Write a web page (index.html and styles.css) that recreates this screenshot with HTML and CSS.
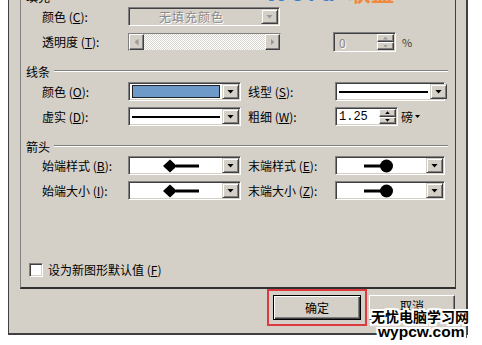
FILE: index.html
```html
<!DOCTYPE html>
<html lang="zh-CN">
<head>
<meta charset="utf-8">
<title>设置自选图形格式</title>
<link rel="stylesheet" href="styles.css">
</head>
<body>
<div class="dialog">
  <div class="panel">
    <div class="head"><span class="head-text">填充</span><i class="rule"></i></div>

    <div class="row r1">
      <span class="lbl">颜色 (<u>C</u>):</span>
      <div class="field combo disabled w-fill">
        <span class="combo-val grayed">无填充颜色</span>
        <span class="dd"><i class="tri tri-dis"></i></span>
      </div>
    </div>

    <div class="row r2">
      <span class="lbl">透明度 (<u>T</u>):</span>
      <div class="slider">
        <span class="sbtn"><i class="tri-l"></i></span>
        <span class="track"></span>
        <span class="sbtn"><i class="tri-r"></i></span>
      </div>
      <div class="field spin disabled pct-spin">
        <span class="spin-val grayed">0</span>
        <span class="spin-btns"><span class="sb"><i class="up dis"></i></span><span class="sb"><i class="down dis"></i></span></span>
      </div>
      <span class="unit pct">%</span>
    </div>

    <div class="head h2"><span class="head-text">线条</span><i class="rule"></i></div>

    <div class="row r3">
      <span class="lbl">颜色 (<u>O</u>):</span>
      <div class="field combo w-left">
        <span class="combo-val"><span class="swatch"></span></span>
        <span class="dd"><i class="tri"></i></span>
      </div>
      <span class="lbl lbl2">线型 (<u>S</u>):</span>
      <div class="field combo w-right">
        <span class="combo-val"><span class="line thin"></span></span>
        <span class="dd"><i class="tri"></i></span>
      </div>
    </div>

    <div class="row r4">
      <span class="lbl">虚实 (<u>D</u>):</span>
      <div class="field combo w-left">
        <span class="combo-val"><span class="line"></span></span>
        <span class="dd"><i class="tri"></i></span>
      </div>
      <span class="lbl lbl2">粗细 (<u>W</u>):</span>
      <div class="field spin w-spin">
        <span class="spin-val mono">1.25</span>
        <span class="spin-btns"><span class="sb"><i class="up"></i></span><span class="sb"><i class="down"></i></span></span>
      </div>
      <span class="unit pt">磅<i class="mini-tri"></i></span>
    </div>

    <div class="head h3"><span class="head-text">箭头</span><i class="rule"></i></div>

    <div class="row r5">
      <span class="lbl">始端样式 (<u>B</u>):</span>
      <div class="field combo w-left">
        <span class="combo-val start-arrow">
          <svg width="38" height="14" viewBox="0 0 38 14"><polygon points="0,7 7,0.5 14,7 7,13.5" fill="#000"/><rect x="13" y="5.5" width="23" height="3" fill="#000"/></svg>
        </span>
        <span class="dd"><i class="tri"></i></span>
      </div>
      <span class="lbl lbl2">末端样式 (<u>E</u>):</span>
      <div class="field combo w-right">
        <span class="combo-val end-arrow">
          <svg width="30" height="14" viewBox="0 0 30 14"><rect x="0" y="5.5" width="20" height="3" fill="#000"/><circle cx="22.5" cy="7" r="6.5" fill="#000"/></svg>
        </span>
        <span class="dd"><i class="tri"></i></span>
      </div>
    </div>

    <div class="row r6">
      <span class="lbl">始端大小 (<u>I</u>):</span>
      <div class="field combo w-left">
        <span class="combo-val start-arrow">
          <svg width="38" height="14" viewBox="0 0 38 14"><polygon points="0,7 7,0.5 14,7 7,13.5" fill="#000"/><rect x="13" y="5.5" width="23" height="3" fill="#000"/></svg>
        </span>
        <span class="dd"><i class="tri"></i></span>
      </div>
      <span class="lbl lbl2">末端大小 (<u>Z</u>):</span>
      <div class="field combo w-right">
        <span class="combo-val end-arrow">
          <svg width="30" height="14" viewBox="0 0 30 14"><rect x="0" y="5.5" width="20" height="3" fill="#000"/><circle cx="22.5" cy="7" r="6.5" fill="#000"/></svg>
        </span>
        <span class="dd"><i class="tri"></i></span>
      </div>
    </div>

    <div class="check-row">
      <span class="checkbox"></span>
      <span class="check-label">设为新图形默认值 (<u>F</u>)</span>
    </div>
  </div>

  <div class="buttons">
    <div class="btn btn-default">确定</div>
    <div class="btn btn-cancel">取消</div>
  </div>
</div>

<div class="wm-top"><span class="wm-word">Word</span><span class="wm-lm">联盟</span></div>
<div class="wm-bottom">
  <div class="wm-cn">无忧电脑学习网</div>
  <div class="wm-en">wypcw.com<i class="wm-bar"></i></div>
</div>
</body>
</html>
```

FILE: styles.css
```css
* { box-sizing: border-box; }
html, body { margin: 0; padding: 0; }
body {
  width: 482px;
  height: 345px;
  overflow: hidden;
  position: relative;
  background: #ffffff;
  font-family: "Noto Sans CJK SC", "Noto Sans", sans-serif;
  font-size: 12px;
  color: #000;
}
u { text-decoration: underline; text-underline-offset: 1px; }

.dialog {
  width: 460px;
  margin: -30px 0 0 8px;
  padding: 14px 10px 13px 11px;
  background: #d4d0c8;
  border-left: 1px solid #404040;
  border-right: 2px solid #404040;
  border-bottom: 2px solid #404040;
  display: flow-root;
}

.panel {
  width: 436px;
  padding: 5px 7px 10px 5px;
  border: 1px solid #808080;
  border-right-color: #404040;
  border-bottom: 2px solid #303030;
  display: flex;
  flex-direction: column;
}

.head {
  height: 14px;
  display: flex;
  align-items: center;
}
.head-text { line-height: 14px; white-space: nowrap; }
.rule {
  flex: 1;
  height: 2px;
  margin: -2px 0 0 4px;
  border-top: 1px solid #808080;
  border-bottom: 1px solid #ffffff;
}
.h2 { margin-top: 13px; }
.h3 { margin-top: 14px; }

.row {
  display: flex;
  align-items: center;
  margin-left: 16px;
}
.r1 { margin-top: 3px; height: 19px; }
.r2 { margin-top: 6px; height: 20px; }
.r3 { margin-top: 3px; height: 19px; }
.r4 { margin-top: 6px; height: 19px; }
.r5 { margin-top: 2px; height: 19px; }
.r6 { margin-top: 6px; height: 19px; }

.lbl { width: 86px; flex: none; white-space: nowrap; line-height: 14px; }
.lbl2 { width: 87px; margin-left: 7px; }

.field {
  height: 19px;
  flex: none;
  display: flex;
  align-items: stretch;
  padding: 1px;
  background: #ffffff;
  border: 1px solid;
  border-color: #808080 #ffffff #ffffff #808080;
  box-shadow: inset 1px 1px 0 #404040, inset -1px -1px 0 #d4d0c8;
}
.field.disabled { background: #d4d0c8; }
.w-fill { width: 152px; }
.w-left { width: 113px; }
.w-right { width: 110px; }
.w-spin { width: 63px; }

.combo-val {
  flex: 1;
  display: flex;
  align-items: center;
  justify-content: center;
  padding: 0 2px;
}
.grayed { color: #8a8a8a; text-shadow: 1px 1px 0 #ffffff; }
.combo.disabled .combo-val { letter-spacing: 1px; padding-right: 10px; }

.dd {
  width: 17px;
  flex: none;
  display: flex;
  align-items: center;
  justify-content: center;
  background: #d4d0c8;
  border: 1px solid;
  border-color: #d4d0c8 #404040 #404040 #d4d0c8;
  box-shadow: inset 1px 1px 0 #ffffff, inset -1px -1px 0 #808080;
}
.tri {
  width: 7px;
  height: 4px;
  background: #000;
  clip-path: polygon(0 0, 100% 0, 50% 100%);
}
.tri-dis { background: #9a9a9a; }

.swatch {
  width: 88px;
  height: 13px;
  background: #6d9ac8;
  border: 1px solid #202020;
}
.line {
  width: 88px;
  height: 2px;
  background: #000;
}
.line.thin { width: 89px; height: 2px; }
.start-arrow { justify-content: flex-start; padding-left: 33px; }
.end-arrow { justify-content: flex-start; padding-left: 27px; }

.slider {
  width: 153px;
  height: 18px;
  flex: none;
  display: flex;
  border: 1px solid;
  border-color: #808080 #d4d0c8 #d4d0c8 #808080;
}
.sbtn {
  width: 15px;
  flex: none;
  display: flex;
  align-items: center;
  justify-content: center;
  background: #d4d0c8;
  border: 1px solid;
  border-color: #ffffff #404040 #404040 #ffffff;
  box-shadow: inset -1px -1px 0 #808080;
}
.track {
  flex: 1;
  background: repeating-conic-gradient(#ffffff 0 25%, #d8d5cf 0 50%) 0 0 / 2px 2px;
}
.tri-l, .tri-r {
  width: 4px;
  height: 7px;
  background: #9a9a9a;
}
.tri-l { clip-path: polygon(100% 0, 100% 100%, 0 50%); }
.tri-r { clip-path: polygon(0 0, 0 100%, 100% 50%); }

.spin { height: 20px; }
.pct-spin { width: 63px; margin-left: 52px; }
.r4 .spin { height: 19px; }
.spin-val {
  flex: 1;
  display: flex;
  align-items: center;
  padding-left: 4px;
}
.mono { font-family: "Liberation Mono", monospace; font-size: 12px; padding-left: 2px; }
.spin-btns {
  width: 17px;
  flex: none;
  display: flex;
  flex-direction: column;
}
.sb {
  flex: 1;
  display: flex;
  align-items: center;
  justify-content: center;
  background: #d4d0c8;
  border: 1px solid;
  border-color: #ffffff #404040 #404040 #ffffff;
  box-shadow: inset -1px -1px 0 #808080;
}
.up, .down { width: 5px; height: 3px; background: #000; }
.up { clip-path: polygon(50% 0, 100% 100%, 0 100%); }
.down { clip-path: polygon(0 0, 100% 0, 50% 100%); }
.up.dis, .down.dis { background: #9a9a9a; }

.unit { white-space: nowrap; }
.pct { margin-left: 6px; color: #404040; font-size: 11px; }
.pt { margin-left: 3px; display: flex; align-items: center; }
.mini-tri {
  width: 5px;
  height: 3px;
  margin-left: 2px;
  background: #000;
  clip-path: polygon(0 0, 100% 0, 50% 100%);
}

.check-row {
  margin-top: 62px;
  height: 15px;
  display: flex;
  align-items: center;
}
.checkbox {
  width: 14px;
  height: 14px;
  margin-left: 3px;
  background: #ffffff;
  border: 1px solid;
  border-color: #808080 #ffffff #ffffff #808080;
  box-shadow: inset 1px 1px 0 #404040, inset -1px -1px 0 #d4d0c8;
}
.check-label { margin-left: 5px; white-space: nowrap; }

.buttons {
  display: flex;
  justify-content: flex-end;
  gap: 8px;
  margin-top: 6px;
  padding-right: 1px;
}
.btn {
  height: 25px;
  display: flex;
  align-items: center;
  justify-content: center;
  background: #d4d0c8;
  border: 1px solid;
  border-color: #ffffff #404040 #404040 #ffffff;
  box-shadow: inset -1px -1px 0 #808080;
}
.btn-default {
  width: 88px;
  border-color: #000;
  box-shadow: inset 1px 1px 0 #ffffff, inset -1px -1px 0 #404040, inset -2px -2px 0 #808080;
  outline: 2px solid #dc3a3e;
  outline-offset: 4px;
}
.btn-cancel { width: 86px; padding-bottom: 4px; }

.wm-top {
  position: absolute;
  left: 265px;
  top: -21px;
  display: flex;
  align-items: baseline;
  font-weight: bold;
  line-height: 24px;
}
.wm-word {
  font-family: "Liberation Sans", sans-serif;
  font-size: 24px;
  letter-spacing: 3px;
  color: #3d7fcf;
}
.wm-lm {
  margin-left: 10px;
  font-family: "Noto Sans CJK SC", sans-serif;
  font-size: 23px;
  color: #ef8a3c;
}

.wm-bottom {
  position: absolute;
  left: 371px;
  top: 308px;
  color: #000;
  text-shadow:
    1px 0 0 #fff, -1px 0 0 #fff, 0 1px 0 #fff, 0 -1px 0 #fff,
    2px 0 0 #fff, -2px 0 0 #fff, 0 2px 0 #fff, 0 -2px 0 #fff,
    1px 1px 0 #fff, -1px -1px 0 #fff, 1px -1px 0 #fff, -1px 1px 0 #fff,
    2px 2px 0 #fff, -2px -2px 0 #fff, 2px -2px 0 #fff, -2px 2px 0 #fff;
}
.wm-cn {
  font-family: "Noto Sans CJK SC", sans-serif;
  font-weight: bold;
  font-size: 14px;
  line-height: 17px;
}
.wm-en {
  margin-left: 7px;
  display: flex;
  align-items: center;
  font-family: "Liberation Sans", sans-serif;
  font-weight: bold;
  font-size: 15.5px;
  line-height: 13px;
}
.wm-bar {
  width: 1px;
  height: 12px;
  margin-left: 2px;
  background: #555;
}
```
